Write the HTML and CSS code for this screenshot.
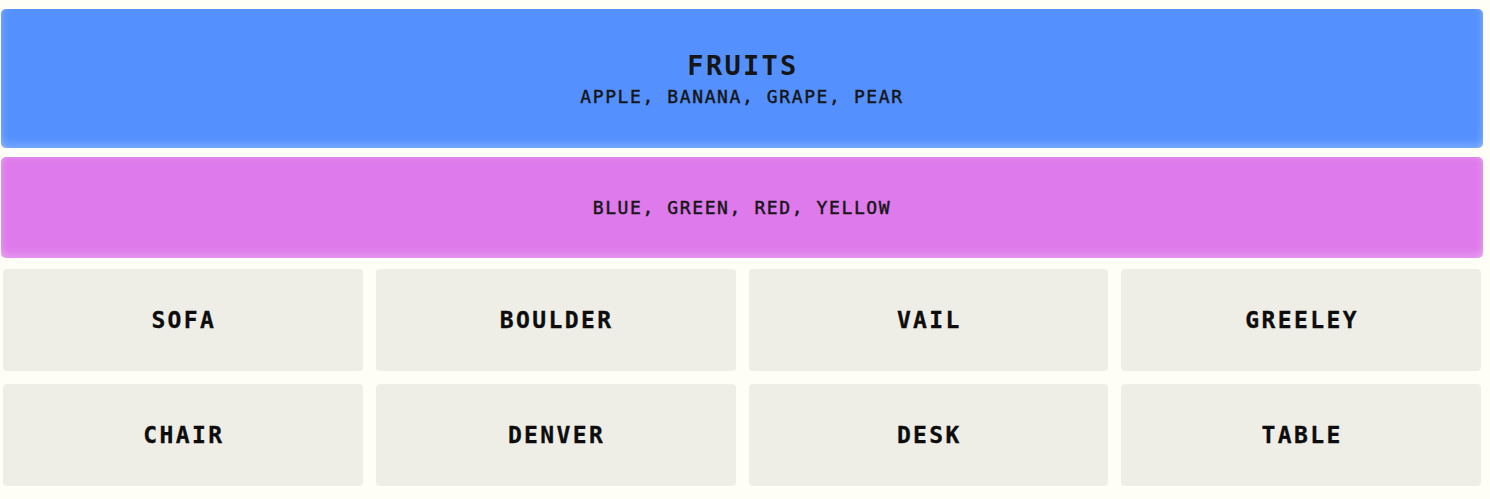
FILE: index.html
```html
<!DOCTYPE html>
<html lang="en">
<head>
<meta charset="utf-8">
<title>Connections</title>
<link rel="stylesheet" href="styles.css">
</head>
<body>
<main class="board">
  <section class="group group-blue">
    <h2 class="group-title">FRUITS</h2>
    <p class="group-words">APPLE, BANANA, GRAPE, PEAR</p>
  </section>
  <section class="group group-pink">
    <p class="group-words">BLUE, GREEN, RED, YELLOW</p>
  </section>
  <div class="grid">
    <button class="tile">SOFA</button>
    <button class="tile">BOULDER</button>
    <button class="tile">VAIL</button>
    <button class="tile">GREELEY</button>
    <button class="tile">CHAIR</button>
    <button class="tile">DENVER</button>
    <button class="tile">DESK</button>
    <button class="tile">TABLE</button>
  </div>
</main>
</body>
</html>
```

FILE: styles.css
```css
html, body {
  margin: 0;
  padding: 0;
  background: #fffef6;
}

body {
  font-family: "DejaVu Sans Mono", "Liberation Mono", monospace;
  color: #141414;
}

.board {
  width: 1482px;
  margin-left: 1px;
  padding-top: 9px;
  display: flex;
  flex-direction: column;
}

.group {
  border-radius: 5px;
  display: flex;
  flex-direction: column;
  align-items: center;
  justify-content: center;
}

.group-blue {
  height: 139px;
  background: #5491ff;
  box-shadow: inset 0 -8px 8px -4px rgba(255, 255, 255, 0.22),
              inset 6px 0 6px -4px rgba(255, 255, 255, 0.18),
              inset -6px 0 6px -4px rgba(255, 255, 255, 0.18);
}

.group-pink {
  margin-top: 9px;
  height: 101px;
  background: #de7aeb;
  box-shadow: inset 0 -8px 8px -4px rgba(255, 255, 255, 0.22),
              inset 0 6px 6px -4px rgba(255, 255, 255, 0.1),
              inset 6px 0 6px -4px rgba(255, 255, 255, 0.18),
              inset -6px 0 6px -4px rgba(255, 255, 255, 0.18);
}

.group-title {
  margin: 0 0 4px 0;
  font-size: 27px;
  font-weight: bold;
  letter-spacing: 2.3px;
  line-height: 32px;
  padding-left: 2px;
  color: #161616;
}

.group-words {
  margin: 0;
  font-size: 18px;
  font-weight: normal;
  letter-spacing: 1.6px;
  line-height: 22px;
  color: #161616;
  -webkit-text-stroke: 0.45px #161616;
}

.grid {
  margin-top: 11px;
  padding: 0 2px 0 2px;
  display: grid;
  grid-template-columns: repeat(4, 1fr);
  column-gap: 13px;
  row-gap: 13px;
}

.tile {
  height: 102px;
  border: none;
  border-radius: 4px;
  background: #efeee6;
  color: #0d0d0d;
  font-family: "DejaVu Sans Mono", "Liberation Mono", monospace;
  font-size: 23px;
  font-weight: bold;
  letter-spacing: 2.4px;
  padding: 0;
  padding-left: 2px;
  cursor: pointer;
  -webkit-text-stroke: 0.3px #0d0d0d;
}
```
